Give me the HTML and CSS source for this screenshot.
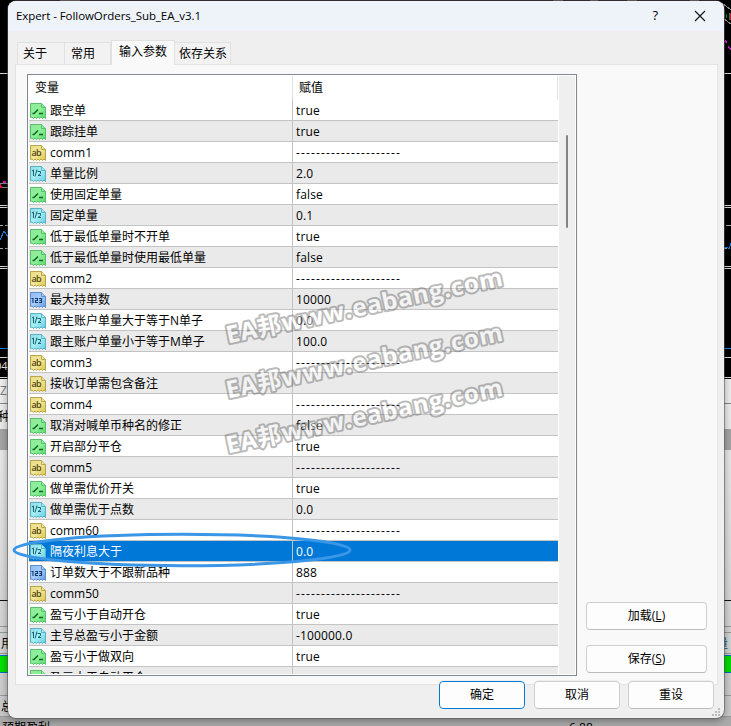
FILE: index.html
```
<!DOCTYPE html>
<html lang="zh-CN">
<head>
<meta charset="utf-8">
<title>Expert - FollowOrders_Sub_EA_v3.1</title>
<link rel="stylesheet" href="styles.css">
</head>
<body>
<svg class="backdrop" width="731" height="726" viewBox="0 0 731 726" shape-rendering="crispEdges">
  <defs><linearGradient id="shade" x1="0" x2="0" y1="0" y2="1"><stop offset="0" stop-color="#f0f0f0"/><stop offset=".5" stop-color="#ddd"/><stop offset="1" stop-color="#c8c8c8"/></linearGradient></defs>
  <rect width="731" height="726" fill="#000"/>
  <rect y="379" width="731" height="347" fill="url(#shade)"/>
  <path d="M0 73.5H731M0 205.500H731M0 207.500H731M0 266.500H731M0 268.500H731M0 357.500H731M0 377.500H731" stroke="#ddd"/>
  <path d="M0 225.500H3M5 225.500H8M0 248.500H3M5 248.500H8M726 225.500H731M723 248.500H727" stroke="#aaa"/>
  <path d="M0 240L4 231L8 237M0 348.500H731M723 247h4l2 2l2 -6" stroke="#1c7fe0" fill="none"/>
  <path d="M0 183h8M1 187h7" stroke="#888"/>
  <path d="M0 184v4M1 186v2" stroke="#e01848" stroke-width="2"/><path d="M3 182h3M725 41l2 2M728 47l3 2" stroke="#d018d0" stroke-width="1.500"/>
  <path d="M724 10v8M726 14v4M729 13v7" stroke="#1f8030"/><path d="M730 13v7" stroke="#c01840"/><path d="M722 3l9 7M724 19l7 5" stroke="#999"/>
  <path d="M60 .5h20M553 .5h10M590 .5h8M627 .5h10M690 .5h9" stroke="#766"/>
  <path d="M0 403.500H731" stroke="#888"/>
  <rect y="429" width="731" height="21" fill="#a5a5a5"/>
  <path d="M0 600.500H731" stroke="#111"/>
  <path d="M0 626.500H731M0 632.500H731M0 653.500H731M0 695.500H731M0 716.500H731" stroke="#999"/>
  <rect x="-1" y="655.500" width="733" height="17" fill="#00df00" stroke="#006fc0"/>
  <rect y="717" width="731" height="9" fill="#aaa"/>
  <g font-family="Open Sans, Noto Sans CJK SC, sans-serif" font-size="12">
    <text x="-5" y="370" fill="#eee" font-size="11">04</text><text x="0" y="395" fill="#777">Z</text>
    <text x="-2" y="421">种</text><text x="1" y="648">用</text><text x="1" y="711">总</text>
    <text x="716" y="648" fill="#075f70">量</text><text x="2" y="732">预期盈利</text><text x="569" y="732">6.88</text>
  </g>
</svg>

<svg class="defs" width="0" height="0">
  <defs>
    <linearGradient id="gg" x2="1" y2="1"><stop stop-color="#8fe89a"/><stop offset=".5" stop-color="#8df09a"/><stop offset="1" stop-color="#58d96a"/></linearGradient>
    <linearGradient id="yg" x2="1" y2="1"><stop stop-color="#e9dc86"/><stop offset=".5" stop-color="#f2e69a"/><stop offset="1" stop-color="#dcc748"/></linearGradient>
    <linearGradient id="cg" x2="1" y2="1"><stop stop-color="#8fdbe6"/><stop offset=".5" stop-color="#a5eff6"/><stop offset="1" stop-color="#62cbe0"/></linearGradient>
    <linearGradient id="ng" x2="1" y2="1"><stop stop-color="#8dbcf0"/><stop offset=".5" stop-color="#a6cdf7"/><stop offset="1" stop-color="#6299e0"/></linearGradient>
    <path id="sheet" d="M.5 .5H11.500L15.500 4.500V15.500L14 14L12.500 15.500L11 14L9.500 15.500L8 14L6.500 15.500L5 14L3.500 15.500L2 14L.5 14.500Z"/>
    <path id="fold" d="M11.500 .5V4.500H15.500"/>
    <symbol id="bool" viewBox="0 0 16 16"><g fill="url(#gg)" stroke="#5abf6b"><use href="#sheet"/><use href="#fold"/></g><path d="M2.500 10.500H4L8 6.500M9 10.500H13" fill="none" stroke="#12641f" stroke-width="1.500"/></symbol>
    <symbol id="str" viewBox="0 0 16 16"><g fill="url(#yg)" stroke="#b9a648"><use href="#sheet"/><use href="#fold"/></g><text x="1.500" y="11" font-family="Open Sans" font-weight="600" font-size="9" textLength="10" fill="#51470c">ab</text></symbol>
    <symbol id="dbl" viewBox="0 0 16 16"><g fill="url(#cg)" stroke="#5ab2c2"><use href="#sheet"/><use href="#fold"/></g><path d="M2 5L3.500 4V10M7 3.500L5 10.500M7.500 5.500H10.500V7.500L8 9.500H11" fill="none" stroke="#176473"/></symbol>
    <symbol id="int" viewBox="0 0 16 16"><g fill="url(#ng)" stroke="#5f8fca"><use href="#sheet"/><use href="#fold"/></g><path d="M1.500 6.500H3V11M5 6.500H7.500V8.500H5.500V10.500H8M9 6.500H11.500V10.500H9M9.500 8.500H11.500" fill="none" stroke="#123b73" stroke-width="1.100"/></symbol>
  </defs>
</svg>

<main class="dialog">
  <header class="titlebar"><span class="title">Expert - FollowOrders_Sub_EA_v3.1</span><span class="help">?</span>
    <svg class="close" width="12" height="12" viewBox="0 0 12 12"><path d="M1 1L11 11M11 1L1 11" stroke="#111" stroke-width="1.100"/></svg></header>
  <nav class="tabs"><span class="tab about">关于</span><span class="tab common">常用</span><span class="tab active">输入参数</span><span class="tab deps">依存关系</span></nav>
  <section class="panel">
    <div class="table">
      <div class="grid">
        <div class="head"><span class="name">变量</span><span class="value">赋值</span></div>
        <div class="rows" id="rows"></div>
      </div>
      <div class="scroll"><div class="thumb"></div></div>
    </div>
    <aside class="side"><button>加载(<u>L</u>)</button><button>保存(<u>S</u>)</button></aside>
  </section>
  <footer class="actions"><button class="ok">确定</button><button>取消</button><button>重设</button></footer>
  <svg class="grip" width="8" height="8" viewBox="0 0 8 8"><path d="M6 0h2v2H6zM3 3h2v2H3zM6 3h2v2H6zM0 6h2v2H0zM3 6h2v2H3zM6 6h2v2H6z" fill="#bcbcbc"/></svg>
</main>

<svg class="overlay" width="731" height="726" viewBox="0 0 731 726">
  <g class="marks">
    <text transform="translate(228 343.500) rotate(-11.900)" textLength="282">EA邦www.eabang.com</text>
    <text transform="translate(228 398.500) rotate(-11.900)" textLength="282">EA邦www.eabang.com</text>
    <text transform="translate(228 453.500) rotate(-11.900)" textLength="282">EA邦www.eabang.com</text>
  </g>
  <ellipse cx="182" cy="550" rx="168" ry="15.700" fill="none" stroke="#3a96e6" stroke-width="3"/>
</svg>
<script src="rows.js"></script>
</body>
</html>
```
FILE: styles.css
```
* { box-sizing: border-box; }
body { margin: 0; width: 731px; height: 726px; overflow: hidden; position: relative; font: 12px/20px "Open Sans", "Noto Sans CJK SC", sans-serif; color: #000; }
.backdrop, .overlay { position: absolute; left: 0; top: 0; }
.defs { position: absolute; }
.overlay { pointer-events: none; }
.dialog { position: relative; width: 716px; height: 717px; margin: 1px 0 0 8px; background: #efefef; border-radius: 8px; overflow: hidden; box-shadow: 0 0 0 1px #5558, 0 2px 9px #0006; display: flex; flex-direction: column; }
.titlebar { height: 30px; flex: none; background: #eef3fa; display: flex; align-items: center; padding: 0 18px 0 8px; }
.title { flex: 1; font-size: 11.5px; letter-spacing: -.07px; }
.help { font-size: 13px; margin: -2px 36px 0 0; }
.tabs { height: 33px; flex: none; padding-left: 9px; display: flex; align-items: flex-end; }
.tab { height: 22px; border: 1px solid #e1e1e1; border-bottom: 0; background: #f2f2f2; padding-left: 5px; white-space: nowrap; line-height: 22px; }
.about { width: 48px; }
.common { width: 46px; padding-left: 6px; border-left: 0; }
.active { width: 64px; height: 25px; padding-left: 7px; background: #f9f9f9; position: relative; margin-bottom: -1px; line-height: 22px; }
.deps { width: 56px; padding-left: 4px; border-left: 0; }
.panel { width: 703px; height: 621px; flex: none; margin-left: 7px; border: 1px solid #e3e3e3; background: #f9f9f9; padding: 9px 9px 8px 11px; display: flex; gap: 9px; }
.table { width: 550px; height: 602px; border: 1px solid #828790; background: #fff; padding: 1px; display: flex; gap: 1px; overflow: hidden; }
.grid { width: 529px; flex: none; overflow: hidden; }
.head { display: flex; height: 24px; line-height: 24px; border-right: 1px solid #e3e3e3; }
.head .name { width: 264px; border-right: 1px solid #e0e0e0; padding-left: 6px; }
.head .value { padding-left: 6px; }
.row { display: flex; height: 21px; border-bottom: 1px solid #c3c3c3; }
.row:nth-child(even) { background: #eaeaea; }
.row .name { width: 264px; border-right: 1px solid #c3c3c3; display: flex; align-items: flex-start; gap: 4px; padding-left: 1px; line-height: 22px; }
.row .name svg { width: 16px; height: 16px; margin-top: 3px; }
.row .value { padding-left: 3px; line-height: 21px; letter-spacing: .15px; white-space: pre; }
.row .dash { letter-spacing: 1.14px; }
.row:nth-child(n).selected { background: #0078d7; color: #fff; }
.scroll { width: 16px; background: #efefef; padding: 59px 0 0 7px; }
.thumb { width: 2px; height: 93px; background: #858585; border-radius: 1px; }
.side { flex: 1; padding-top: 528px; display: flex; flex-direction: column; gap: 15px; }
button { height: 28px; flex: none; border: 1px solid #cfcfcf; border-bottom-color: #bcbcbc; border-radius: 4px; background: #fdfdfd; font: inherit; color: #000; padding: 0; }
.side button { width: 121px; }
.actions { display: flex; gap: 8px; justify-content: flex-end; padding-right: 10px; margin-top: -4px; position: relative; }
.actions button { width: 86px; outline: 1px solid #efefef; }
.actions .ok { border-color: #0078d4; margin-right: 1px; }
.grip { position: absolute; right: 4px; bottom: 2px; }
.close { margin-top: -1px; }
.marks { opacity: .46; font: 700 24px "Open Sans", "Noto Sans CJK SC", sans-serif; fill: #fff; stroke: #6c6c6c; stroke-width: 4px; paint-order: stroke; stroke-linejoin: round; }
```
FILE: rows.js
```
const dashes = '-'.repeat(21);
const data = [
  ['bool', '跟空单', 'true'], ['bool', '跟踪挂单', 'true'], ['str', 'comm1', dashes],
  ['dbl', '单量比例', '2.0'], ['bool', '使用固定单量', 'false'], ['dbl', '固定单量', '0.1'],
  ['bool', '低于最低单量时不开单', 'true'], ['bool', '低于最低单量时使用最低单量', 'false'],
  ['str', 'comm2', dashes], ['int', '最大持单数', '10000'],
  ['dbl', '跟主账户单量大于等于N单子', '0.0'], ['dbl', '跟主账户单量小于等于M单子', '100.0'],
  ['str', 'comm3', dashes], ['str', '接收订单需包含备注', ''], ['str', 'comm4', dashes],
  ['bool', '取消对喊单币种名的修正', 'false'], ['bool', '开启部分平仓', 'true'], ['str', 'comm5', dashes],
  ['bool', '做单需优价开关', 'true'], ['dbl', '做单需优于点数', '0.0'], ['str', 'comm60', dashes],
  ['dbl', '隔夜利息大于', '0.0'], ['int', '订单数大于不跟新品种', '888'], ['str', 'comm50', dashes],
  ['bool', '盈亏小于自动开仓', 'true'], ['dbl', '主号总盈亏小于金额', '-100000.0'],
  ['bool', '盈亏小于做双向', 'true'], ['bool', '盈亏大于自动平仓', '']
];
document.getElementById('rows').innerHTML = data.map(([icon, name, value], i) =>
  `<div class="row${i === 21 ? ' selected' : ''}"><span class="name"><svg><use href="#${icon}"/></svg>${name}</span><span class="value${value === dashes ? ' dash' : ''}">${value}</span></div>`
).join('');
```
